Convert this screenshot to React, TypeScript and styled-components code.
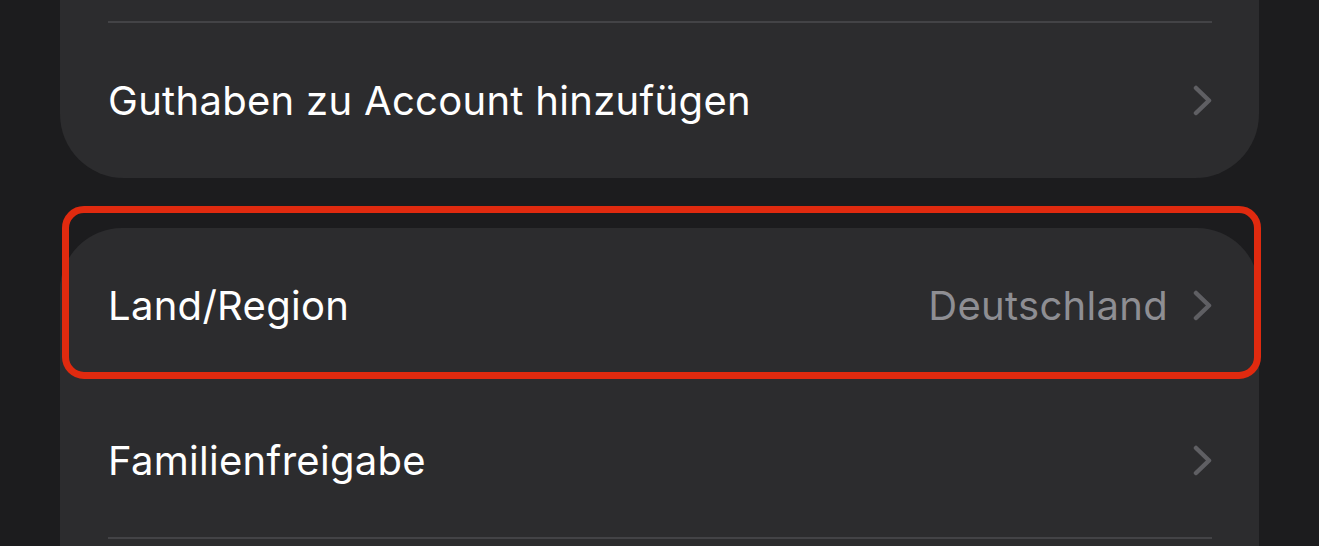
import React from "react";
import styled, { createGlobalStyle } from "styled-components";

const Global = createGlobalStyle`
  html, body {
    margin: 0;
    padding: 0;
    background: #1c1c1e;
    height: 546px;
    overflow: hidden;
  }
  body {
    font-family: Inter, "Noto Sans", "Liberation Sans", sans-serif;
    -webkit-font-smoothing: antialiased;
  }
`;

const Page = styled.div`
  display: flex;
  flex-direction: column;
  gap: 50px;
  padding: 0 60px;
  width: 1319px;
  box-sizing: border-box;
`;

const Card = styled.div<{ $top?: boolean }>`
  position: relative;
  background: #2c2c2e;
  border-radius: ${(p) => (p.$top ? "0 0 64px 64px" : "62px 62px 0 0")};
  padding-top: ${(p) => (p.$top ? "21px" : "0")};
  padding-bottom: ${(p) => (p.$top ? "0" : "7px")};
  display: flex;
  flex-direction: column;
`;

const Divider = styled.div`
  height: 2px;
  margin: 0 47px 0 48px;
  background: #434346;
`;

const Row = styled.div<{ $h?: number }>`
  height: ${(p) => p.$h ?? 155}px;
  display: flex;
  align-items: center;
  padding: 0 47px 0 48px;
  box-sizing: border-box;
`;

const Label = styled.span`
  flex: 1;
  color: #ffffff;
  font-size: 40px;
  letter-spacing: 0.3px;
`;

const Value = styled.span`
  color: #8e8e93;
  font-size: 40px;
  letter-spacing: 0.3px;
  margin-right: 25px;
`;

const Highlight = styled.div`
  position: absolute;
  top: -22px;
  left: 2px;
  right: -2px;
  height: 173px;
  border: 7px solid #e02a0f;
  border-radius: 22px;
  box-sizing: border-box;
  pointer-events: none;
`;

const Chevron = () => (
  <svg width="19" height="31" viewBox="0 0 19 31" fill="none">
    <path
      d="M3 3 L16 15.5 L3 28"
      stroke="#5f5f63"
      strokeWidth="4.5"
      strokeLinecap="round"
      strokeLinejoin="round"
    />
  </svg>
);

export default function App() {
  return (
    <>
      <Global />
      <Page>
        <Card $top>
          <Divider />
          <Row $h={155}>
            <Label>Guthaben zu Account hinzufügen</Label>
            <Chevron />
          </Row>
        </Card>
        <Card>
          <Highlight />
          <Row $h={155}>
            <Label>Land/Region</Label>
            <Value>Deutschland</Value>
            <Chevron />
          </Row>
          <Row $h={154}>
            <Label>Familienfreigabe</Label>
            <Chevron />
          </Row>
          <Divider />
        </Card>
      </Page>
    </>
  );
}
